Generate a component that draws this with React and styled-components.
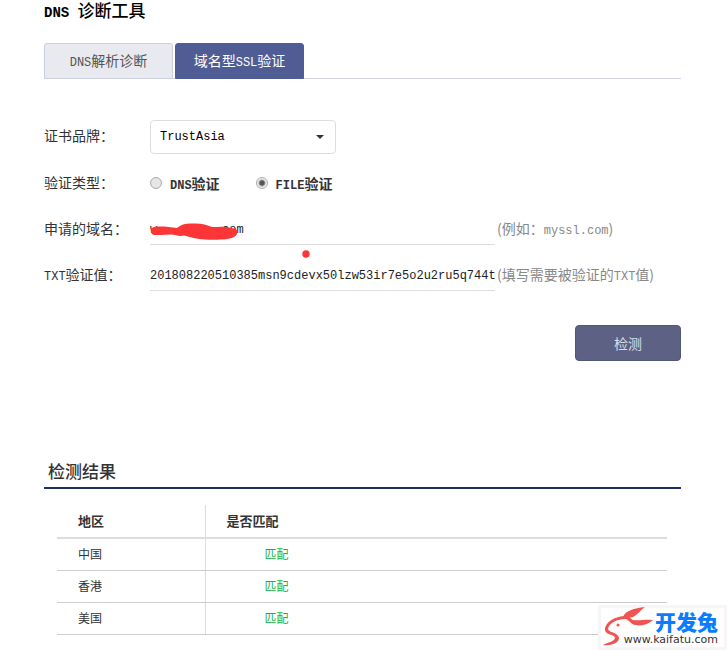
import React, { useState } from 'react';
import styled, { createGlobalStyle } from 'styled-components';

const regions = ['中国', '香港', '美国'];

const App = () => {
   const [type, setType] = useState('file');
   const [domain, setDomain] = useState('w         com');
   const [txt, setTxt] = useState('201808220510385msn9cdevx50lzw53ir7e5o2u2ru5q744ti3');

   return (
      <>
         <GlobalStyle />
         <Page>
            <Title><Latin $size={14}>DNS </Latin>诊断工具</Title>
            <Tabs>
               <Tab type="button"><Latin>DNS</Latin>解析诊断</Tab>
               <Tab type="button" $active>域名型<Latin>SSL</Latin>验证</Tab>
            </Tabs>
            <Form onSubmit={(e) => e.preventDefault()}>
               <Row $height={48}>
                  <Label htmlFor="brand">证书品牌：</Label>
                  <SelectBox>
                     <Select id="brand" defaultValue="TrustAsia">
                        <option>TrustAsia</option>
                     </Select>
                     <Caret viewBox="0 0 8 4"><path d="M0 0h8L4 4z" /></Caret>
                  </SelectBox>
               </Row>
               <Row role="radiogroup" aria-labelledby="type" $height={46}>
                  <Label as="span" id="type">验证类型：</Label>
                  <Option>
                     <Radio name="type" checked={type === 'dns'} onChange={() => setType('dns')} />
                     <span><Latin>DNS</Latin>验证</span>
                  </Option>
                  <Option>
                     <Radio name="type" checked={type === 'file'} onChange={() => setType('file')} />
                     <span><Latin>FILE</Latin>验证</span>
                  </Option>
               </Row>
               <Row $height={46}>
                  <Label htmlFor="domain">申请的域名：</Label>
                  <Field>
                     <Input id="domain" value={domain} onChange={(e) => setDomain(e.target.value)} />
                     <Scribble viewBox="0 0 160 36">
                        <path d="M4 4 C10 3 20 4 27 5 C31 1 37 0 43 0.500 C51 0 57 2 62 4 C69 4 75 3 81 5 C88 5 90 10 84 14 C79 17 65 17 55 16.500 C47 16 40 14 34 12.500 C28 14 25 11 20 11.500 C13 12 8 12 4 12 C0 11 0 5 4 4Z" />
                        <circle cx="156" cy="31" r="3.700" />
                     </Scribble>
                  </Field>
                  <Hint>(例如：<Latin>myssl.com</Latin>)</Hint>
               </Row>
               <Row $height={46}>
                  <Label htmlFor="txt"><Latin>TXT</Latin>验证值：</Label>
                  <Field>
                     <Input id="txt" value={txt} onChange={(e) => setTxt(e.target.value)} />
                  </Field>
                  <Hint>(填写需要被验证的<Latin>TXT</Latin>值)</Hint>
               </Row>
               <Submit type="submit">检测</Submit>
            </Form>
            <ResultTitle>检测结果</ResultTitle>
            <Table>
               <thead>
                  <tr>
                     <Th>地区</Th>
                     <Th>是否匹配</Th>
                  </tr>
               </thead>
               <tbody>
                  {regions.map((region) => (
                     <tr key={region}>
                        <Td>{region}</Td>
                        <Match>匹配</Match>
                     </tr>
                  ))}
               </tbody>
            </Table>
         </Page>
         <Watermark>
            <Rabbit viewBox="0 0 60 44">
               <path d="M25 12 C27 6 36 3 47 2 C42 5 41 9 35 12 C31 13 28 13 25 12Z" />
               <path d="M31 14 C38 17 46 14 55 15 C50 20 41 22 35 19Z" />
               <path d="M29 11 C17 11 7 17 7 25 C7 30 17 29 17 33 C16 37 10 37 5 40 C13 41 21 38 21 33 C20 27 11 28 10 24 C11 18 19 14 28 14 C32 16 33 19 37 20 C35 16 34 13 29 11Z" />
               <circle cx="20" cy="20" r="1.500" />
            </Rabbit>
            <Brand>开发兔</Brand>
            <Site>www.kaifatu.com</Site>
         </Watermark>
      </>
   )
}
export default App;

const GlobalStyle = createGlobalStyle`
   * {
      box-sizing: border-box;
   }
   body {
      margin: 0;
      background: #fff;
      color: #333;
      font-family: "Noto Sans CJK SC", sans-serif;
      font-size: 14px;
   }
   button, input, select {
      font-family: inherit;
   }
`;
const Page = styled.main`
   padding: 0 46px 0 44px;
`;
const Latin = styled.span`
   font-family: "Liberation Mono", monospace;
   font-size: ${(p) => p.$size || 12}px;
   white-space: pre;
`;
const Title = styled.h1`
   margin: 0;
   height: 43px;
   color: #000;
   font-size: 17px;
   font-weight: 500;
   line-height: 20px;
   ${Latin} {
      font-weight: 700;
   }
`;
const Tabs = styled.div`
   display: flex;
   gap: 2px;
   border-bottom: 1px solid #d3d4e4;
`;
const Tab = styled.button`
   width: 129px;
   height: 36px;
   margin-bottom: -1px;
   padding: 0 0 2px;
   border: 1px solid ${(p) => (p.$active ? '#4f5d94' : '#cccfe0')};
   border-radius: 3px 3px 0 0;
   background: ${(p) => (p.$active ? '#4f5d94' : '#e9eaf0')};
   color: ${(p) => (p.$active ? '#fff' : '#555')};
   font-size: 14px;
`;
const Form = styled.form`
   display: flex;
   flex-direction: column;
   padding-top: 34px;
`;
const Row = styled.div`
   display: flex;
   align-items: center;
   min-width: 0;
   height: ${(p) => p.$height}px;
`;
const Label = styled.label`
   flex: none;
   width: 106px;
   padding-bottom: 4px;
   white-space: nowrap;
`;
const SelectBox = styled.div`
   position: relative;
   width: 186px;
`;
const Select = styled.select`
   appearance: none;
   width: 100%;
   height: 34px;
   padding: 0 9px;
   border: 1px solid #ddd;
   border-radius: 4px;
   background: #fff;
   color: #000;
   font-family: "Liberation Mono", monospace;
   font-size: 12px;
`;
const Caret = styled.svg`
   position: absolute;
   top: 15px;
   right: 12px;
   width: 8px;
   fill: #333;
   pointer-events: none;
`;
const Option = styled.label`
   display: flex;
   align-items: center;
   gap: 8px;
   margin-right: 36px;
   padding-bottom: 3px;
   font-weight: 700;
`;
const Radio = styled.input.attrs({ type: 'radio' })`
   appearance: none;
   width: 12px;
   height: 12px;
   margin: 0;
   border: 1px solid #aaa;
   border-radius: 50%;
   background: #e6e6e6;
   &:checked {
      background: radial-gradient(circle, #555 2px, #eee 4px);
   }
`;
const Field = styled.div`
   position: relative;
   flex: 0 1 345px;
   min-width: 0;
`;
const Input = styled.input`
   display: block;
   width: 100%;
   height: 30px;
   padding: 0;
   border: 0;
   border-bottom: 1px solid #ddd;
   background: transparent;
   color: #222;
   font-family: "Liberation Mono", monospace;
   font-size: 12px;
   outline: none;
`;
const Scribble = styled.svg`
   position: absolute;
   top: 8px;
   left: 0;
   width: 160px;
   height: 36px;
   fill: #fc3637;
   pointer-events: none;
`;
const Hint = styled.span`
   padding: 0 0 4px 2px;
   color: #888;
   white-space: nowrap;
`;
const Submit = styled.button`
   align-self: flex-end;
   width: 106px;
   height: 36px;
   margin-top: 26px;
   border: 1px solid #52577a;
   border-radius: 4px;
   background: #5d6183;
   color: #dcdde8;
   font-size: 14px;
`;
const ResultTitle = styled.h2`
   margin: 96px 0 16px;
   padding: 0 4px 2px;
   border-bottom: 2px solid #1c2f66;
   font-size: 17px;
   font-weight: 500;
   line-height: 28px;
`;
const Table = styled.table`
   width: calc(100% - 27px);
   margin-left: 13px;
   border-collapse: collapse;
   table-layout: fixed;
   line-height: 20px;
   th:first-child, td:first-child {
      width: 148px;
      padding-left: 21px;
      border-right: 1px solid #ddd;
   }
`;
const Th = styled.th`
   height: 33px;
   padding: 0 21px;
   border-bottom: 2px solid #ddd;
   font-size: 13px;
   font-weight: 700;
   text-align: left;
`;
const Td = styled.td`
   height: 32px;
   padding: 0 21px;
   border-bottom: 1px solid #ccc;
   font-size: 12px;
`;
const Match = styled(Td)`
   padding-left: 59px;
   color: #0fb93c;
`;
const Watermark = styled.div`
   position: absolute;
   right: 0;
   top: 605px;
   display: flex;
   flex-direction: column;
   align-items: flex-end;
   gap: 3px;
   width: 129px;
   height: 45px;
   padding: 3px 6px 0 0;
   border: 3px solid #f7f5f5;
   background: #fff;
`;
const Rabbit = styled.svg`
   position: absolute;
   top: -3px;
   left: -3px;
   width: 60px;
   height: 44px;
   fill: #f15350;
`;
const Brand = styled.div`
   color: #0a7cff;
   font-size: 21px;
   font-weight: 900;
   line-height: 20px;
`;
const Site = styled.div`
   position: relative;
   color: #333;
   font-family: "DejaVu Sans", sans-serif;
   font-size: 11px;
   line-height: 12px;
`;
